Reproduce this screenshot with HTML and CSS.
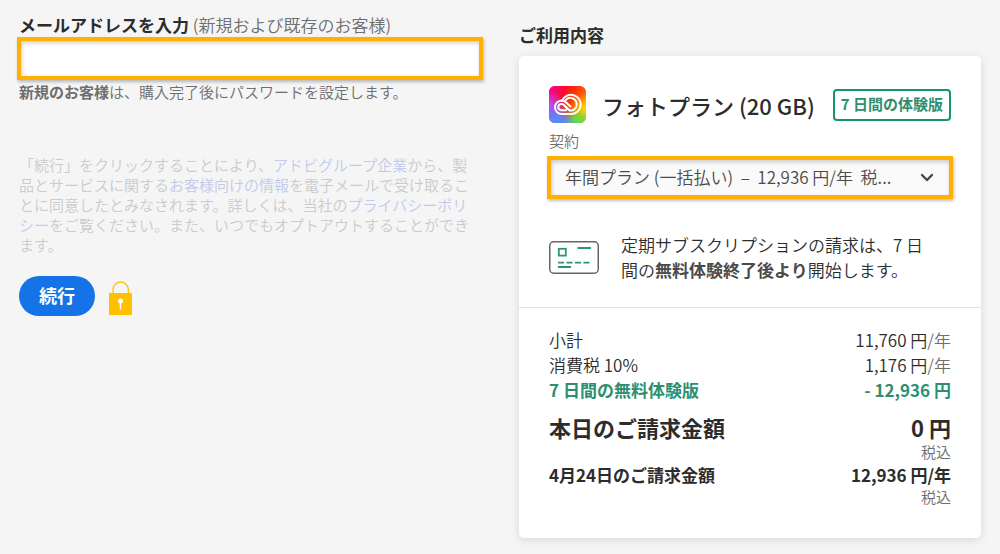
FILE: index.html
```html
<!DOCTYPE html>
<html lang="ja">
<head>
<meta charset="utf-8">
<meta name="viewport" content="width=device-width, initial-scale=1">
<title>ご利用内容</title>
<link rel="stylesheet" href="styles.css">
</head>
<body>
<main class="checkout">
  <form class="account">
    <label class="field-label" for="email"><strong>メールアドレスを入力</strong> <span class="muted">(新規および既存のお客様)</span></label>
    <input class="highlight email" id="email" type="email" aria-describedby="email-help">
    <p class="help" id="email-help"><strong>新規のお客様</strong>は、購入完了後にパスワードを設定します。</p>
    <p class="consent">「続行」をクリックすることにより、<a href="#">アドビグループ企業</a>から、製品とサービスに関する<a href="#">お客様向けの情報</a>を電子メールで受け取ることに同意したとみなされます。詳しくは、当社の<a href="#">プライバシーポリシー</a>をご覧ください。また、いつでもオプトアウトすることができます。</p>
    <div class="actions">
      <button class="continue" type="button">続行</button>
      <svg class="lock" width="24" height="35" viewBox="0 0 24 35" aria-hidden="true">
        <path d="M4 13V9a7.700 8 0 0 1 15.400 0v4" fill="none" stroke="#ffc000" stroke-width="1.300"/>
        <rect x="0" y="12" width="23" height="22" fill="#ffc000"/>
        <circle cx="11.500" cy="20" r="2.500" fill="#fff"/>
        <path d="M11.500 21v7.500" stroke="#fff" stroke-width="1.500"/>
      </svg>
    </div>
  </form>

  <section class="summary">
    <h2 class="summary-title">ご利用内容</h2>
    <div class="card">
      <div class="plan">
        <header class="product">
          <svg class="logo" width="37" height="37" viewBox="0 0 37 37" aria-hidden="true">
            <defs>
              <clipPath id="tile"><rect width="37" height="37" rx="6"/></clipPath>
              <radialGradient id="violet" gradientUnits="userSpaceOnUse" cx="-2" cy="23" r="19"><stop offset="0" stop-color="#b044ff"/><stop offset=".3" stop-color="#b44cf8"/><stop offset="1" stop-color="#b44cf8" stop-opacity="0"/></radialGradient>
              <radialGradient id="blue" gradientUnits="userSpaceOnUse" cx="7" cy="39" r="20"><stop offset="0" stop-color="#4f8cff"/><stop offset=".4" stop-color="#5c86f8"/><stop offset="1" stop-color="#5c86f8" stop-opacity="0"/></radialGradient>
              <radialGradient id="green" gradientUnits="userSpaceOnUse" cx="28" cy="41" r="19"><stop offset="0" stop-color="#3ee43e"/><stop offset=".4" stop-color="#5de04c"/><stop offset="1" stop-color="#5de04c" stop-opacity="0"/></radialGradient>
              <radialGradient id="yellow" gradientUnits="userSpaceOnUse" cx="38" cy="24" r="18"><stop offset="0" stop-color="#ffdc00"/><stop offset=".3" stop-color="#ffc800"/><stop offset="1" stop-color="#ffb000" stop-opacity="0"/></radialGradient>
              <radialGradient id="pink" gradientUnits="userSpaceOnUse" cx="0" cy="4" r="20"><stop offset="0" stop-color="#ff009c"/><stop offset="1" stop-color="#ff009c" stop-opacity="0"/></radialGradient>
              <linearGradient id="red" x1="0" y1="0" x2="1" y2=".5"><stop offset=".4" stop-color="#fa1010"/><stop offset="1" stop-color="#ff7800"/></linearGradient>
            </defs>
            <g clip-path="url(#tile)">
              <rect width="37" height="37" fill="url(#red)"/>
              <rect width="37" height="37" fill="url(#pink)"/>
              <rect width="37" height="37" fill="url(#yellow)"/>
              <rect width="37" height="37" fill="url(#violet)"/>
              <rect width="37" height="37" fill="url(#green)"/>
              <rect width="37" height="37" fill="url(#blue)"/>
            </g>
            <g fill="none" stroke="#fff" stroke-width="2" stroke-linecap="round" stroke-linejoin="round">
              <path d="M13 28H22a9.600 9.600 0 1 0-8.700-13.500"/>
              <path d="M21.500 20.500l-4.700-4.300a6.700 6.700 0 0 0-4.300-1.700 6.750 6.750 0 0 0 .5 13.500"/>
              <path d="M17 24.300h-4.500a3.200 3.200 0 1 1 2.200-5.500l6 5.700"/>
              <path d="M16.800 14a6.300 6.300 0 1 1 5.600 10.400c-1.600 0-2.700-.6-3.700-1.500l-3-2.800"/>
            </g>
          </svg>
          <h3 class="product-name">フォトプラン (20 GB)</h3>
          <span class="trial-badge">7 日間の体験版</span>
        </header>
        <label class="contract-label" for="contract">契約</label>
        <div class="highlight contract">
          <select id="contract" class="contract-select">
            <option>年間プラン (一括払い) &nbsp;–&nbsp; 12,936 円/年 &nbsp;税...</option>
          </select>
          <svg class="chevron" width="14" height="10" viewBox="0 0 14 10" aria-hidden="true"><path d="M2 2l5 5 5-5" fill="none" stroke="#444" stroke-width="2.300" stroke-linecap="round" stroke-linejoin="round"/></svg>
        </div>
        <div class="notice">
          <svg class="card-icon" width="50" height="33" viewBox="0 0 50 33" aria-hidden="true">
            <rect x=".75" y=".75" width="48.500" height="31.500" rx="4" fill="none" stroke="#6b6369" stroke-width="1.500"/>
            <rect x="9.800" y="7.800" width="7" height="6.800" fill="none" stroke="#2d9475" stroke-width="1.800"/>
            <path d="M28.500 7H42M9 21.700h6m2.500 0h6m2.500 0h6m2.500 0h6M9 26h13" fill="none" stroke="#2d9475" stroke-width="1.800"/>
          </svg>
          <p class="notice-text">定期サブスクリプションの請求は、7 日間の<strong>無料体験終了後より</strong>開始します。</p>
        </div>
      </div>
      <table class="prices">
        <tbody>
          <tr><th scope="row">小計</th><td>11,760 円<span class="muted">/年</span></td></tr>
          <tr><th scope="row">消費税 10%</th><td>1,176 円<span class="muted">/年</span></td></tr>
          <tr class="discount"><th scope="row">7 日間の無料体験版</th><td>- 12,936 円</td></tr>
          <tr class="today"><th scope="row">本日のご請求金額</th><td>0 円<small class="tax">税込</small></td></tr>
          <tr class="later"><th scope="row">4月24日のご請求金額</th><td>12,936 円/年<small class="tax">税込</small></td></tr>
        </tbody>
      </table>
    </div>
  </section>
</main>
</body>
</html>
```

FILE: styles.css
```css
* {
  box-sizing: border-box;
}

body {
  margin: 0;
  background: #f5f5f5;
  color: #2c2c2c;
  font: 350 17px/25px "Noto Sans CJK JP", sans-serif;
}

h2,
h3,
p {
  margin: 0;
}

strong {
  font-weight: 700;
}

.muted {
  color: #6e6e6e;
}

.checkout {
  display: grid;
  grid-template-columns: 1fr 1fr;
  gap: 38px;
  padding: 12px 19px 16px;
}

.account {
  display: flex;
  flex-direction: column;
}

.highlight {
  margin: 0 -2px;
  border: 4px solid #ffb000;
  box-shadow: 1px 2px 3px rgba(0, 0, 0, 0.25), inset 1px 2px 4px rgba(0, 0, 0, 0.2);
}

.email {
  height: 43px;
  padding: 0 12px;
  background: #fff;
  font: inherit;
  outline: none;
}

.help {
  margin-top: 2px;
  color: #6e6e6e;
  font-size: 15px;
  line-height: 20px;
}

.consent {
  margin-top: 54px;
  color: #cbcbcb;
  font-family: "Liberation Sans", "Noto Sans CJK JP", sans-serif;
  font-size: 15px;
  line-height: 20px;
}

.consent a {
  color: #c3c9ea;
  text-decoration: none;
}

.actions {
  display: flex;
  align-items: center;
  gap: 14px;
  margin-top: 20px;
}

.continue {
  height: 40px;
  padding: 0 20px 2px;
  border: 0;
  border-radius: 20px;
  background: #1473e6;
  color: #fff;
  font: inherit;
  font-size: 18px;
  font-weight: 700;
}

.lock {
  margin-top: 4px;
}

.summary-title {
  margin: 10px 0 9px;
  font-size: 17px;
  font-weight: 700;
}

.card {
  border-radius: 5px;
  background: #fff;
  box-shadow: 0 2px 10px rgba(0, 0, 0, 0.12);
}

.plan {
  padding: 30px 30px 25px;
  border-bottom: 1px solid #e1e1e1;
}

.product {
  display: flex;
  align-items: center;
}

.logo {
  flex: none;
}

.product-name {
  flex: 1;
  margin-left: 16px;
  font-size: 22px;
  font-weight: 500;
  line-height: 30px;
  white-space: nowrap;
}

.trial-badge {
  padding: 2px 6px 4px;
  border: 2px solid #12976c;
  border-radius: 4px;
  color: #2d8f70;
  font-size: 15px;
  font-weight: 700;
  line-height: 22px;
  white-space: nowrap;
}

.contract-label {
  display: block;
  margin: 8px 0 5px;
  color: #6e6e6e;
  font-size: 15px;
  line-height: 20px;
}

.contract {
  display: grid;
  align-items: center;
  height: 43px;
  background: #fafafa;
}

.contract-select,
.chevron {
  grid-area: 1 / 1;
}

.contract-select {
  width: 100%;
  height: 35px;
  padding: 0 48px 2px 14px;
  border: 0;
  background: transparent;
  color: #4b4b4b;
  font: inherit;
  appearance: none;
}

.chevron {
  justify-self: end;
  margin-right: 15px;
  pointer-events: none;
}

.notice {
  display: flex;
  align-items: center;
  gap: 22px;
  margin-top: 33px;
}

.card-icon {
  flex: none;
}

.notice-text {
  padding-right: 16px;
}

.notice-text strong {
  color: #4b4b4b;
}

.prices {
  width: calc(100% - 60px);
  margin: 0 30px;
  padding: 19px 0 31px;
  border-collapse: separate;
  border-spacing: 0;
}

.prices th,
.prices td {
  padding: 0;
  vertical-align: top;
  font-weight: inherit;
}

.prices th {
  text-align: left;
}

.prices td {
  text-align: right;
}

.discount {
  color: #2d8f70;
  font-weight: 700;
}

.today {
  font-size: 22px;
  font-weight: 700;
  line-height: 30px;
}

.today th,
.today td {
  padding-top: 10px;
}

.later {
  font-weight: 700;
}

.tax {
  display: block;
  color: #6e6e6e;
  font-size: 15px;
  font-weight: 350;
  line-height: 20px;
}
```
